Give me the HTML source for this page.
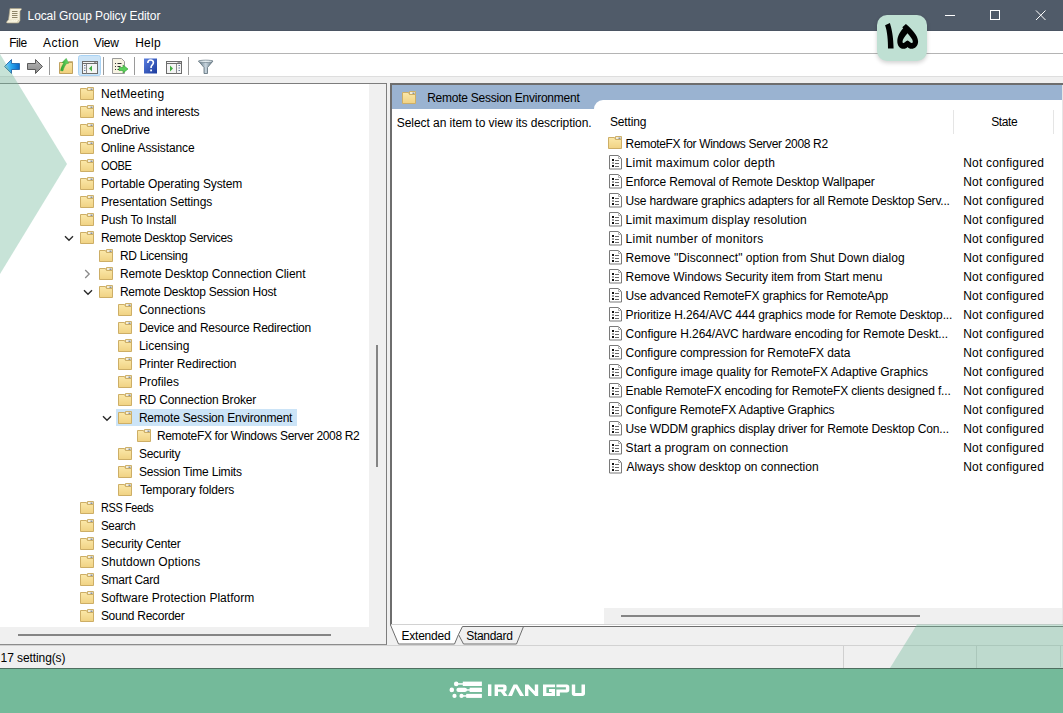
<!DOCTYPE html>
<html><head><meta charset="utf-8"><style>
*{margin:0;padding:0;box-sizing:border-box}
html,body{width:1063px;height:713px;overflow:hidden;background:#f0f0f0;font-family:"Liberation Sans", sans-serif;font-size:12px;color:#000}
.a{position:absolute}
.ic{position:absolute;display:block}
.t{position:absolute;white-space:nowrap;line-height:15px;font-size:12px}
</style></head><body>
<svg width="0" height="0" style="position:absolute"><defs>
<linearGradient id="fg" x1="0" y1="0" x2="0" y2="1"><stop offset="0" stop-color="#fbe8a9"/><stop offset="1" stop-color="#f0d283"/></linearGradient>
</defs></svg>

<!-- title bar -->
<div class="a" style="left:0;top:0;width:1063px;height:31px;background:#505b69;border-bottom:1px solid #4b5563"></div>
<svg class="ic" style="left:6px;top:7px" width="17" height="17" viewBox="0 0 17 17">
<path d="M4 1.5h10.5c0.8 0 1.2 0.5 0.9 1.2l-1.4 1.3v9.5l-1.5 2.5h-11c-0.9 0-1.3-0.6-0.8-1.3l1.8-1.7z" fill="#f6f1dc" stroke="#a9a084" stroke-width="0.7"/>
<path d="M2 13.3h10.5l-1.3 2.5" fill="none" stroke="#c9c09c" stroke-width="0.8"/>
<path d="M1.6 14.2c1.5-0.6 3-0.6 10.2-0.6" fill="none" stroke="#fffbe8" stroke-width="1"/>
<path d="M6 4.5h5.5M6 6.5h5.5M6 8.5h5.5M6 10.5h5.5" stroke="#8f876a" stroke-width="1"/>
</svg>
<div class="t" style="left:27.60px;top:9px;letter-spacing:-0.108px;color:#fff">Local Group Policy Editor</div>
<svg class="ic" style="left:944px;top:10px" width="104" height="12" viewBox="0 0 104 12">
<path d="M1 5.5h10" stroke="#fff" stroke-width="1"/>
<rect x="46.5" y="0.5" width="9" height="9" fill="none" stroke="#fff" stroke-width="1"/>
<path d="M92 0.5l9.5 9.5M101.5 0.5l-9.5 9.5" stroke="#fff" stroke-width="1"/>
</svg>

<!-- menu -->
<div class="a" style="left:0;top:31px;width:1063px;height:23px;background:#fff;border-bottom:1px solid #b4b4b4"></div>
<div class="t" style="left:9.20px;top:35.5px;letter-spacing:-0.467px">File</div>
<div class="t" style="left:43.00px;top:35.5px;letter-spacing:0.440px">Action</div>
<div class="t" style="left:93.80px;top:35.5px;letter-spacing:-0.200px">View</div>
<div class="t" style="left:135.20px;top:35.5px;letter-spacing:0.267px">Help</div>

<!-- toolbar -->
<div class="a" style="left:0;top:54px;width:1063px;height:22px;background:#fff"></div>
<div class="a" style="left:0;top:76px;width:1063px;height:7px;background:#f0f0f0;border-top:1px solid #dedede"></div>
<!-- toolbar icons -->
<svg class="ic" style="left:0;top:54px" width="220" height="22" viewBox="0 54 220 22">
<defs>
<linearGradient id="bl" x1="0" y1="0" x2="1" y2="0"><stop offset="0" stop-color="#8fd6f7"/><stop offset="0.45" stop-color="#2aa8ee"/><stop offset="1" stop-color="#0a66c8"/></linearGradient>
<linearGradient id="gr" x1="0" y1="0" x2="0" y2="1"><stop offset="0" stop-color="#b8b8b8"/><stop offset="1" stop-color="#8a8a8a"/></linearGradient>
<linearGradient id="hb" x1="0" y1="0" x2="1" y2="1"><stop offset="0" stop-color="#5b7fe0"/><stop offset="1" stop-color="#1a3a9c"/></linearGradient>
<linearGradient id="uf" x1="0" y1="0" x2="0" y2="1"><stop offset="0" stop-color="#f8e4a4"/><stop offset="1" stop-color="#f1cf7c"/></linearGradient>
<linearGradient id="ua" x1="0" y1="0" x2="1" y2="0"><stop offset="0" stop-color="#2aa02a"/><stop offset="1" stop-color="#6fe06f"/></linearGradient>
<linearGradient id="fn" x1="0" y1="0" x2="1" y2="0"><stop offset="0" stop-color="#5a6f7c"/><stop offset="0.5" stop-color="#c9d6df"/><stop offset="1" stop-color="#5a6f7c"/></linearGradient>
</defs>
<!-- back -->
<path d="M4.5 66.5L11.5 59.5V63.5H19.5V69.5H11.5V73.5Z" fill="url(#bl)" stroke="#2f6fae" stroke-width="1" stroke-linejoin="round"/>
<!-- forward -->
<path d="M42.5 66.5L35.5 59.5V63.5H27.5V69.5H35.5V73.5Z" fill="url(#gr)" stroke="#5a5a5a" stroke-width="1" stroke-linejoin="round"/>
<rect x="49" y="57" width="1" height="18" fill="#9a9a9a"/>
<!-- up folder -->
<path d="M68.5 61.5h4v2h-4z" fill="#e9e2c8" stroke="#b9a060" stroke-width="0.7"/>
<path d="M59.5 62.5h13v11h-13z" fill="url(#uf)" stroke="#b99a55" stroke-width="0.9"/>
<path d="M60.6 70.6C61.2 67.5 62.3 65 63.8 63.3L62.2 62.4L66.2 58.4L68.6 63.3L66.6 63.5C65 65.4 63.7 67.9 62.9 70.9Z" fill="url(#ua)" stroke="#2f9a2f" stroke-width="0.5" stroke-linejoin="round"/>
<!-- highlighted button -->
<rect x="78.5" y="55.5" width="22" height="20" rx="2" fill="#cce4f7" stroke="#a9d3f5"/>
<rect x="82.5" y="61.5" width="15" height="12" fill="#f4f4f4" stroke="#6c6c6c"/>
<path d="M82.5 63.5h15" stroke="#6c6c6c"/>
<path d="M94 62.5h2.5" stroke="#9a9a9a"/>
<path d="M86.5 64v9.5" stroke="#8a8a8a"/>
<path d="M84 65.5h1.5M84 68h1.5M84 70.5h1.5" stroke="#6a7fa0"/>
<path d="M92 65.5v6l-3-3z" fill="#3fae3f"/>
<rect x="103" y="57" width="1" height="18" fill="#9a9a9a"/>
<!-- export list -->
<path d="M112.5 58.5h9l3 3v12h-12z" fill="#f7f3e2" stroke="#8f8f8f" stroke-width="0.9"/>
<path d="M115 63.5h1M117.5 63.5h4M115 66.5h1M117.5 66.5h3M115 69.5h1M117.5 69.5h2" stroke="#333" stroke-width="1"/>
<path d="M119 67.5h4v-2.5l5 4-5 4v-2.5h-4z" fill="#5bd05b" stroke="#2f9f2f" stroke-width="0.6"/>
<rect x="134" y="57" width="1" height="18" fill="#9a9a9a"/>
<!-- help -->
<rect x="144" y="58.5" width="13" height="15" fill="url(#hb)"/>
<path d="M147.8 63c0-2 1.3-3 2.8-3s2.8 1 2.8 2.8c0 2-2.3 2.2-2.3 4.3v0.8" fill="none" stroke="#fff" stroke-width="1.6"/>
<rect x="150.2" y="69.5" width="1.8" height="1.8" fill="#fff"/>
<!-- show action pane -->
<rect x="166.5" y="61.5" width="15" height="12" fill="#f4f4f4" stroke="#6c6c6c"/>
<path d="M166.5 63.5h15" stroke="#6c6c6c"/>
<path d="M177.5 62.5h3" stroke="#9a9a9a"/>
<path d="M176.5 64v9.5" stroke="#8a8a8a"/>
<path d="M178.5 65.5h1.5M178.5 68h1.5M178.5 70.5h1.5" stroke="#6a7fa0"/>
<path d="M170 65.5v6l3-3z" fill="#3fae3f"/>
<rect x="188" y="57" width="1" height="18" fill="#9a9a9a"/>
<!-- filter -->
<path d="M198.5 61h14.5l-5.5 6.5v6h-3.5v-6z" fill="url(#fn)" stroke="#5d6f7a" stroke-width="0.8" stroke-linejoin="round"/>
<ellipse cx="205.75" cy="61.3" rx="7" ry="1.2" fill="#e6eef2" stroke="#5d6f7a" stroke-width="0.6"/>
</svg>


<!-- tree pane -->
<div class="a" style="left:0;top:83px;width:387px;height:562px;background:#fff;border-top:1px solid #7d7d7d;border-right:1px solid #7d7d7d;border-bottom:1px solid #8c8c8c;overflow:hidden">
</div>
<div class="a" style="left:116px;top:409px;width:181px;height:17px;background:#cce4f7"></div>
<div class="a" style="left:0;top:0;width:369px;height:627px;overflow:hidden;clip-path:inset(84px 0 0 0)">
<svg class="ic" style="left:80px;top:87px" width="15" height="14" viewBox="0 0 15 14"><path d="M7.5 0.5h6v4h-6z" fill="#f3ecd6" stroke="#cdb06a"/><path d="M10.5 1.5h2v1.5h-2z" fill="#8a949e"/><path d="M0.5 1.5h6l1 2h6v9h-13z" fill="url(#fg)" stroke="#cdae66"/></svg><div class="t" style="left:100.90px;top:87.0px;letter-spacing:0.200px">NetMeeting</div><svg class="ic" style="left:80px;top:105px" width="15" height="14" viewBox="0 0 15 14"><path d="M7.5 0.5h6v4h-6z" fill="#f3ecd6" stroke="#cdb06a"/><path d="M10.5 1.5h2v1.5h-2z" fill="#8a949e"/><path d="M0.5 1.5h6l1 2h6v9h-13z" fill="url(#fg)" stroke="#cdae66"/></svg><div class="t" style="left:100.90px;top:105.0px;letter-spacing:-0.200px">News and interests</div><svg class="ic" style="left:80px;top:123px" width="15" height="14" viewBox="0 0 15 14"><path d="M7.5 0.5h6v4h-6z" fill="#f3ecd6" stroke="#cdb06a"/><path d="M10.5 1.5h2v1.5h-2z" fill="#8a949e"/><path d="M0.5 1.5h6l1 2h6v9h-13z" fill="url(#fg)" stroke="#cdae66"/></svg><div class="t" style="left:100.90px;top:123.0px;letter-spacing:-0.229px">OneDrive</div><svg class="ic" style="left:80px;top:141px" width="15" height="14" viewBox="0 0 15 14"><path d="M7.5 0.5h6v4h-6z" fill="#f3ecd6" stroke="#cdb06a"/><path d="M10.5 1.5h2v1.5h-2z" fill="#8a949e"/><path d="M0.5 1.5h6l1 2h6v9h-13z" fill="url(#fg)" stroke="#cdae66"/></svg><div class="t" style="left:100.90px;top:141.0px;letter-spacing:-0.100px">Online Assistance</div><svg class="ic" style="left:80px;top:159px" width="15" height="14" viewBox="0 0 15 14"><path d="M7.5 0.5h6v4h-6z" fill="#f3ecd6" stroke="#cdb06a"/><path d="M10.5 1.5h2v1.5h-2z" fill="#8a949e"/><path d="M0.5 1.5h6l1 2h6v9h-13z" fill="url(#fg)" stroke="#cdae66"/></svg><div class="t" style="left:100.90px;top:159.0px;transform:scaleX(0.92);transform-origin:1.2px 0;letter-spacing:-0.400px">OOBE</div><svg class="ic" style="left:80px;top:177px" width="15" height="14" viewBox="0 0 15 14"><path d="M7.5 0.5h6v4h-6z" fill="#f3ecd6" stroke="#cdb06a"/><path d="M10.5 1.5h2v1.5h-2z" fill="#8a949e"/><path d="M0.5 1.5h6l1 2h6v9h-13z" fill="url(#fg)" stroke="#cdae66"/></svg><div class="t" style="left:100.90px;top:177.0px;letter-spacing:-0.108px">Portable Operating System</div><svg class="ic" style="left:80px;top:195px" width="15" height="14" viewBox="0 0 15 14"><path d="M7.5 0.5h6v4h-6z" fill="#f3ecd6" stroke="#cdb06a"/><path d="M10.5 1.5h2v1.5h-2z" fill="#8a949e"/><path d="M0.5 1.5h6l1 2h6v9h-13z" fill="url(#fg)" stroke="#cdae66"/></svg><div class="t" style="left:100.90px;top:195.0px;letter-spacing:-0.140px">Presentation Settings</div><svg class="ic" style="left:80px;top:213px" width="15" height="14" viewBox="0 0 15 14"><path d="M7.5 0.5h6v4h-6z" fill="#f3ecd6" stroke="#cdb06a"/><path d="M10.5 1.5h2v1.5h-2z" fill="#8a949e"/><path d="M0.5 1.5h6l1 2h6v9h-13z" fill="url(#fg)" stroke="#cdae66"/></svg><div class="t" style="left:100.90px;top:213.0px;letter-spacing:-0.171px">Push To Install</div><svg class="ic" style="left:80px;top:231px" width="15" height="14" viewBox="0 0 15 14"><path d="M7.5 0.5h6v4h-6z" fill="#f3ecd6" stroke="#cdb06a"/><path d="M10.5 1.5h2v1.5h-2z" fill="#8a949e"/><path d="M0.5 1.5h6l1 2h6v9h-13z" fill="url(#fg)" stroke="#cdae66"/></svg><div class="t" style="left:100.90px;top:231.0px;letter-spacing:-0.309px">Remote Desktop Services</div><svg class="ic" style="left:64px;top:235px" width="10" height="7" viewBox="0 0 10 7"><path d="M1 1.2l4 4 4-4" fill="none" stroke="#2b2b2b" stroke-width="1.4"/></svg><svg class="ic" style="left:99px;top:249px" width="15" height="14" viewBox="0 0 15 14"><path d="M7.5 0.5h6v4h-6z" fill="#f3ecd6" stroke="#cdb06a"/><path d="M10.5 1.5h2v1.5h-2z" fill="#8a949e"/><path d="M0.5 1.5h6l1 2h6v9h-13z" fill="url(#fg)" stroke="#cdae66"/></svg><div class="t" style="left:119.90px;top:249.0px;letter-spacing:-0.309px">RD Licensing</div><svg class="ic" style="left:99px;top:267px" width="15" height="14" viewBox="0 0 15 14"><path d="M7.5 0.5h6v4h-6z" fill="#f3ecd6" stroke="#cdb06a"/><path d="M10.5 1.5h2v1.5h-2z" fill="#8a949e"/><path d="M0.5 1.5h6l1 2h6v9h-13z" fill="url(#fg)" stroke="#cdae66"/></svg><div class="t" style="left:119.90px;top:267.0px;letter-spacing:-0.058px">Remote Desktop Connection Client</div><svg class="ic" style="left:84px;top:269px" width="7" height="10" viewBox="0 0 7 10"><path d="M1.2 1l4 4-4 4" fill="none" stroke="#8a8a8a" stroke-width="1.3"/></svg><svg class="ic" style="left:99px;top:285px" width="15" height="14" viewBox="0 0 15 14"><path d="M7.5 0.5h6v4h-6z" fill="#f3ecd6" stroke="#cdb06a"/><path d="M10.5 1.5h2v1.5h-2z" fill="#8a949e"/><path d="M0.5 1.5h6l1 2h6v9h-13z" fill="url(#fg)" stroke="#cdae66"/></svg><div class="t" style="left:119.90px;top:285.0px;letter-spacing:-0.262px">Remote Desktop Session Host</div><svg class="ic" style="left:83px;top:289px" width="10" height="7" viewBox="0 0 10 7"><path d="M1 1.2l4 4 4-4" fill="none" stroke="#2b2b2b" stroke-width="1.4"/></svg><svg class="ic" style="left:118px;top:303px" width="15" height="14" viewBox="0 0 15 14"><path d="M7.5 0.5h6v4h-6z" fill="#f3ecd6" stroke="#cdb06a"/><path d="M10.5 1.5h2v1.5h-2z" fill="#8a949e"/><path d="M0.5 1.5h6l1 2h6v9h-13z" fill="url(#fg)" stroke="#cdae66"/></svg><div class="t" style="left:138.90px;top:303.0px">Connections</div><svg class="ic" style="left:118px;top:321px" width="15" height="14" viewBox="0 0 15 14"><path d="M7.5 0.5h6v4h-6z" fill="#f3ecd6" stroke="#cdb06a"/><path d="M10.5 1.5h2v1.5h-2z" fill="#8a949e"/><path d="M0.5 1.5h6l1 2h6v9h-13z" fill="url(#fg)" stroke="#cdae66"/></svg><div class="t" style="left:138.90px;top:321.0px;letter-spacing:-0.213px">Device and Resource Redirection</div><svg class="ic" style="left:118px;top:339px" width="15" height="14" viewBox="0 0 15 14"><path d="M7.5 0.5h6v4h-6z" fill="#f3ecd6" stroke="#cdb06a"/><path d="M10.5 1.5h2v1.5h-2z" fill="#8a949e"/><path d="M0.5 1.5h6l1 2h6v9h-13z" fill="url(#fg)" stroke="#cdae66"/></svg><div class="t" style="left:138.90px;top:339.0px;letter-spacing:-0.025px">Licensing</div><svg class="ic" style="left:118px;top:357px" width="15" height="14" viewBox="0 0 15 14"><path d="M7.5 0.5h6v4h-6z" fill="#f3ecd6" stroke="#cdb06a"/><path d="M10.5 1.5h2v1.5h-2z" fill="#8a949e"/><path d="M0.5 1.5h6l1 2h6v9h-13z" fill="url(#fg)" stroke="#cdae66"/></svg><div class="t" style="left:138.90px;top:357.0px;letter-spacing:-0.100px">Printer Redirection</div><svg class="ic" style="left:118px;top:375px" width="15" height="14" viewBox="0 0 15 14"><path d="M7.5 0.5h6v4h-6z" fill="#f3ecd6" stroke="#cdb06a"/><path d="M10.5 1.5h2v1.5h-2z" fill="#8a949e"/><path d="M0.5 1.5h6l1 2h6v9h-13z" fill="url(#fg)" stroke="#cdae66"/></svg><div class="t" style="left:138.90px;top:375.0px">Profiles</div><svg class="ic" style="left:118px;top:393px" width="15" height="14" viewBox="0 0 15 14"><path d="M7.5 0.5h6v4h-6z" fill="#f3ecd6" stroke="#cdb06a"/><path d="M10.5 1.5h2v1.5h-2z" fill="#8a949e"/><path d="M0.5 1.5h6l1 2h6v9h-13z" fill="url(#fg)" stroke="#cdae66"/></svg><div class="t" style="left:138.90px;top:393.0px;letter-spacing:-0.137px">RD Connection Broker</div><svg class="ic" style="left:118px;top:411px" width="15" height="14" viewBox="0 0 15 14"><path d="M7.5 0.5h6v4h-6z" fill="#f3ecd6" stroke="#cdb06a"/><path d="M10.5 1.5h2v1.5h-2z" fill="#8a949e"/><path d="M0.5 1.5h6l1 2h6v9h-13z" fill="url(#fg)" stroke="#cdae66"/></svg><div class="t" style="left:138.90px;top:411.0px;letter-spacing:-0.208px">Remote Session Environment</div><svg class="ic" style="left:102px;top:415px" width="10" height="7" viewBox="0 0 10 7"><path d="M1 1.2l4 4 4-4" fill="none" stroke="#2b2b2b" stroke-width="1.4"/></svg><svg class="ic" style="left:137px;top:429px" width="15" height="14" viewBox="0 0 15 14"><path d="M7.5 0.5h6v4h-6z" fill="#f3ecd6" stroke="#cdb06a"/><path d="M10.5 1.5h2v1.5h-2z" fill="#8a949e"/><path d="M0.5 1.5h6l1 2h6v9h-13z" fill="url(#fg)" stroke="#cdae66"/></svg><div class="t" style="left:156.90px;top:429.0px;letter-spacing:-0.329px">RemoteFX for Windows Server 2008 R2</div><svg class="ic" style="left:118px;top:447px" width="15" height="14" viewBox="0 0 15 14"><path d="M7.5 0.5h6v4h-6z" fill="#f3ecd6" stroke="#cdb06a"/><path d="M10.5 1.5h2v1.5h-2z" fill="#8a949e"/><path d="M0.5 1.5h6l1 2h6v9h-13z" fill="url(#fg)" stroke="#cdae66"/></svg><div class="t" style="left:138.90px;top:447.0px;letter-spacing:-0.257px">Security</div><svg class="ic" style="left:118px;top:465px" width="15" height="14" viewBox="0 0 15 14"><path d="M7.5 0.5h6v4h-6z" fill="#f3ecd6" stroke="#cdb06a"/><path d="M10.5 1.5h2v1.5h-2z" fill="#8a949e"/><path d="M0.5 1.5h6l1 2h6v9h-13z" fill="url(#fg)" stroke="#cdae66"/></svg><div class="t" style="left:138.90px;top:465.0px;letter-spacing:-0.200px">Session Time Limits</div><svg class="ic" style="left:118px;top:483px" width="15" height="14" viewBox="0 0 15 14"><path d="M7.5 0.5h6v4h-6z" fill="#f3ecd6" stroke="#cdb06a"/><path d="M10.5 1.5h2v1.5h-2z" fill="#8a949e"/><path d="M0.5 1.5h6l1 2h6v9h-13z" fill="url(#fg)" stroke="#cdae66"/></svg><div class="t" style="left:139.90px;top:483.0px;letter-spacing:-0.100px">Temporary folders</div><svg class="ic" style="left:80px;top:501px" width="15" height="14" viewBox="0 0 15 14"><path d="M7.5 0.5h6v4h-6z" fill="#f3ecd6" stroke="#cdb06a"/><path d="M10.5 1.5h2v1.5h-2z" fill="#8a949e"/><path d="M0.5 1.5h6l1 2h6v9h-13z" fill="url(#fg)" stroke="#cdae66"/></svg><div class="t" style="left:100.90px;top:501.0px;transform:scaleX(0.905);transform-origin:1.2px 0;letter-spacing:-0.400px">RSS Feeds</div><svg class="ic" style="left:80px;top:519px" width="15" height="14" viewBox="0 0 15 14"><path d="M7.5 0.5h6v4h-6z" fill="#f3ecd6" stroke="#cdb06a"/><path d="M10.5 1.5h2v1.5h-2z" fill="#8a949e"/><path d="M0.5 1.5h6l1 2h6v9h-13z" fill="url(#fg)" stroke="#cdae66"/></svg><div class="t" style="left:100.90px;top:519.0px;transform:scaleX(0.963);transform-origin:1.2px 0;letter-spacing:-0.400px">Search</div><svg class="ic" style="left:80px;top:537px" width="15" height="14" viewBox="0 0 15 14"><path d="M7.5 0.5h6v4h-6z" fill="#f3ecd6" stroke="#cdb06a"/><path d="M10.5 1.5h2v1.5h-2z" fill="#8a949e"/><path d="M0.5 1.5h6l1 2h6v9h-13z" fill="url(#fg)" stroke="#cdae66"/></svg><div class="t" style="left:100.90px;top:537.0px;letter-spacing:-0.200px">Security Center</div><svg class="ic" style="left:80px;top:555px" width="15" height="14" viewBox="0 0 15 14"><path d="M7.5 0.5h6v4h-6z" fill="#f3ecd6" stroke="#cdb06a"/><path d="M10.5 1.5h2v1.5h-2z" fill="#8a949e"/><path d="M0.5 1.5h6l1 2h6v9h-13z" fill="url(#fg)" stroke="#cdae66"/></svg><div class="t" style="left:100.90px;top:555.0px;letter-spacing:0.080px">Shutdown Options</div><svg class="ic" style="left:80px;top:573px" width="15" height="14" viewBox="0 0 15 14"><path d="M7.5 0.5h6v4h-6z" fill="#f3ecd6" stroke="#cdb06a"/><path d="M10.5 1.5h2v1.5h-2z" fill="#8a949e"/><path d="M0.5 1.5h6l1 2h6v9h-13z" fill="url(#fg)" stroke="#cdae66"/></svg><div class="t" style="left:100.90px;top:573.0px;letter-spacing:-0.289px">Smart Card</div><svg class="ic" style="left:80px;top:591px" width="15" height="14" viewBox="0 0 15 14"><path d="M7.5 0.5h6v4h-6z" fill="#f3ecd6" stroke="#cdb06a"/><path d="M10.5 1.5h2v1.5h-2z" fill="#8a949e"/><path d="M0.5 1.5h6l1 2h6v9h-13z" fill="url(#fg)" stroke="#cdae66"/></svg><div class="t" style="left:100.90px;top:591.0px;letter-spacing:0.022px">Software Protection Platform</div><svg class="ic" style="left:80px;top:609px" width="15" height="14" viewBox="0 0 15 14"><path d="M7.5 0.5h6v4h-6z" fill="#f3ecd6" stroke="#cdb06a"/><path d="M10.5 1.5h2v1.5h-2z" fill="#8a949e"/><path d="M0.5 1.5h6l1 2h6v9h-13z" fill="url(#fg)" stroke="#cdae66"/></svg><div class="t" style="left:100.90px;top:609.0px;letter-spacing:-0.277px">Sound Recorder</div>
</div>
<div class="a" style="left:369px;top:84px;width:17px;height:543px;background:#f0f0f0"></div>
<div class="a" style="left:376px;top:345px;width:2px;height:122px;background:#858585"></div>
<div class="a" style="left:0;top:627px;width:386px;height:17px;background:#f0f0f0"></div>
<div class="a" style="left:18px;top:634px;width:313px;height:2px;background:#858585"></div>

<!-- right pane -->
<div class="a" style="left:390px;top:83px;width:673px;height:543px;background:#fff;border-top:2px solid #6e6e6e;border-left:2px solid #6e6e6e"></div>
<div class="a" style="left:392px;top:85px;width:670px;height:24px;background:#9ab3d1"></div>
<div class="a" style="left:594px;top:100px;width:468px;height:525px;background:#fff;border-top-left-radius:9px"></div>
<svg class="ic" style="left:402px;top:91px" width="15" height="14" viewBox="0 0 15 14"><path d="M7.5 0.5h6v4h-6z" fill="#f3ecd6" stroke="#cdb06a"/><path d="M10.5 1.5h2v1.5h-2z" fill="#8a949e"/><path d="M0.5 1.5h6l1 2h6v9h-13z" fill="url(#fg)" stroke="#cdae66"/></svg>
<div class="t" style="left:427.20px;top:91px;letter-spacing:-0.248px">Remote Session Environment</div>
<div class="t" style="left:396.70px;top:116px;letter-spacing:-0.047px">Select an item to view its description.</div>
<div class="t" style="left:610.00px;top:115px;letter-spacing:-0.167px">Setting</div>
<div class="t" style="left:991.20px;top:115px;letter-spacing:-0.400px">State</div>
<div class="a" style="left:953px;top:110px;width:1px;height:24px;background:#e5e5e5"></div>
<div class="a" style="left:1053px;top:110px;width:1px;height:24px;background:#e5e5e5"></div>
<svg class="ic" style="left:608px;top:136px" width="15" height="14" viewBox="0 0 15 14"><path d="M7.5 0.5h6v4h-6z" fill="#f3ecd6" stroke="#cdb06a"/><path d="M10.5 1.5h2v1.5h-2z" fill="#8a949e"/><path d="M0.5 1.5h6l1 2h6v9h-13z" fill="url(#fg)" stroke="#cdae66"/></svg><div class="t" style="left:625.60px;top:137px;letter-spacing:-0.341px">RemoteFX for Windows Server 2008 R2</div><svg class="ic" style="left:609px;top:155px" width="14" height="15" viewBox="0 0 14 15"><path d="M0.5 0.5h9l3 3v10.5h-12z" fill="#fff" stroke="#7a7a7a"/><path d="M9.5 0.5v3h3" fill="none" stroke="#b5b5b5"/><rect x="3" y="4" width="2" height="2" fill="#111"/><rect x="3" y="7" width="2" height="2" fill="#999"/><rect x="3" y="10" width="2" height="2" fill="#111"/><path d="M6 5h4v1h-4zM6 8h4v1h-4zM6 11h4v1h-4z" fill="#6a6a6a"/></svg><div class="t" style="left:625.60px;top:156px;letter-spacing:0.250px">Limit maximum color depth</div><div class="t" style="left:963.20px;top:156px;letter-spacing:0.200px">Not configured</div><svg class="ic" style="left:609px;top:174px" width="14" height="15" viewBox="0 0 14 15"><path d="M0.5 0.5h9l3 3v10.5h-12z" fill="#fff" stroke="#7a7a7a"/><path d="M9.5 0.5v3h3" fill="none" stroke="#b5b5b5"/><rect x="3" y="4" width="2" height="2" fill="#111"/><rect x="3" y="7" width="2" height="2" fill="#999"/><rect x="3" y="10" width="2" height="2" fill="#111"/><path d="M6 5h4v1h-4zM6 8h4v1h-4zM6 11h4v1h-4z" fill="#6a6a6a"/></svg><div class="t" style="left:625.60px;top:175px;letter-spacing:-0.138px">Enforce Removal of Remote Desktop Wallpaper</div><div class="t" style="left:963.20px;top:175px;letter-spacing:0.200px">Not configured</div><svg class="ic" style="left:609px;top:193px" width="14" height="15" viewBox="0 0 14 15"><path d="M0.5 0.5h9l3 3v10.5h-12z" fill="#fff" stroke="#7a7a7a"/><path d="M9.5 0.5v3h3" fill="none" stroke="#b5b5b5"/><rect x="3" y="4" width="2" height="2" fill="#111"/><rect x="3" y="7" width="2" height="2" fill="#999"/><rect x="3" y="10" width="2" height="2" fill="#111"/><path d="M6 5h4v1h-4zM6 8h4v1h-4zM6 11h4v1h-4z" fill="#6a6a6a"/></svg><div class="t" style="left:625.60px;top:194px;letter-spacing:-0.193px">Use hardware graphics adapters for all Remote Desktop Serv...</div><div class="t" style="left:963.20px;top:194px;letter-spacing:0.200px">Not configured</div><svg class="ic" style="left:609px;top:212px" width="14" height="15" viewBox="0 0 14 15"><path d="M0.5 0.5h9l3 3v10.5h-12z" fill="#fff" stroke="#7a7a7a"/><path d="M9.5 0.5v3h3" fill="none" stroke="#b5b5b5"/><rect x="3" y="4" width="2" height="2" fill="#111"/><rect x="3" y="7" width="2" height="2" fill="#999"/><rect x="3" y="10" width="2" height="2" fill="#111"/><path d="M6 5h4v1h-4zM6 8h4v1h-4zM6 11h4v1h-4z" fill="#6a6a6a"/></svg><div class="t" style="left:625.60px;top:213px;letter-spacing:0.142px">Limit maximum display resolution</div><div class="t" style="left:963.20px;top:213px;letter-spacing:0.200px">Not configured</div><svg class="ic" style="left:609px;top:231px" width="14" height="15" viewBox="0 0 14 15"><path d="M0.5 0.5h9l3 3v10.5h-12z" fill="#fff" stroke="#7a7a7a"/><path d="M9.5 0.5v3h3" fill="none" stroke="#b5b5b5"/><rect x="3" y="4" width="2" height="2" fill="#111"/><rect x="3" y="7" width="2" height="2" fill="#999"/><rect x="3" y="10" width="2" height="2" fill="#111"/><path d="M6 5h4v1h-4zM6 8h4v1h-4zM6 11h4v1h-4z" fill="#6a6a6a"/></svg><div class="t" style="left:625.60px;top:232px;letter-spacing:0.243px">Limit number of monitors</div><div class="t" style="left:963.20px;top:232px;letter-spacing:0.200px">Not configured</div><svg class="ic" style="left:609px;top:250px" width="14" height="15" viewBox="0 0 14 15"><path d="M0.5 0.5h9l3 3v10.5h-12z" fill="#fff" stroke="#7a7a7a"/><path d="M9.5 0.5v3h3" fill="none" stroke="#b5b5b5"/><rect x="3" y="4" width="2" height="2" fill="#111"/><rect x="3" y="7" width="2" height="2" fill="#999"/><rect x="3" y="10" width="2" height="2" fill="#111"/><path d="M6 5h4v1h-4zM6 8h4v1h-4zM6 11h4v1h-4z" fill="#6a6a6a"/></svg><div class="t" style="left:625.60px;top:251px;letter-spacing:0.051px">Remove &quot;Disconnect&quot; option from Shut Down dialog</div><div class="t" style="left:963.20px;top:251px;letter-spacing:0.200px">Not configured</div><svg class="ic" style="left:609px;top:269px" width="14" height="15" viewBox="0 0 14 15"><path d="M0.5 0.5h9l3 3v10.5h-12z" fill="#fff" stroke="#7a7a7a"/><path d="M9.5 0.5v3h3" fill="none" stroke="#b5b5b5"/><rect x="3" y="4" width="2" height="2" fill="#111"/><rect x="3" y="7" width="2" height="2" fill="#999"/><rect x="3" y="10" width="2" height="2" fill="#111"/><path d="M6 5h4v1h-4zM6 8h4v1h-4zM6 11h4v1h-4z" fill="#6a6a6a"/></svg><div class="t" style="left:625.60px;top:270px;letter-spacing:-0.047px">Remove Windows Security item from Start menu</div><div class="t" style="left:963.20px;top:270px;letter-spacing:0.200px">Not configured</div><svg class="ic" style="left:609px;top:288px" width="14" height="15" viewBox="0 0 14 15"><path d="M0.5 0.5h9l3 3v10.5h-12z" fill="#fff" stroke="#7a7a7a"/><path d="M9.5 0.5v3h3" fill="none" stroke="#b5b5b5"/><rect x="3" y="4" width="2" height="2" fill="#111"/><rect x="3" y="7" width="2" height="2" fill="#999"/><rect x="3" y="10" width="2" height="2" fill="#111"/><path d="M6 5h4v1h-4zM6 8h4v1h-4zM6 11h4v1h-4z" fill="#6a6a6a"/></svg><div class="t" style="left:625.60px;top:289px;letter-spacing:-0.177px">Use advanced RemoteFX graphics for RemoteApp</div><div class="t" style="left:963.20px;top:289px;letter-spacing:0.200px">Not configured</div><svg class="ic" style="left:609px;top:307px" width="14" height="15" viewBox="0 0 14 15"><path d="M0.5 0.5h9l3 3v10.5h-12z" fill="#fff" stroke="#7a7a7a"/><path d="M9.5 0.5v3h3" fill="none" stroke="#b5b5b5"/><rect x="3" y="4" width="2" height="2" fill="#111"/><rect x="3" y="7" width="2" height="2" fill="#999"/><rect x="3" y="10" width="2" height="2" fill="#111"/><path d="M6 5h4v1h-4zM6 8h4v1h-4zM6 11h4v1h-4z" fill="#6a6a6a"/></svg><div class="t" style="left:625.60px;top:308px;letter-spacing:-0.132px">Prioritize H.264/AVC 444 graphics mode for Remote Desktop...</div><div class="t" style="left:963.20px;top:308px;letter-spacing:0.200px">Not configured</div><svg class="ic" style="left:609px;top:326px" width="14" height="15" viewBox="0 0 14 15"><path d="M0.5 0.5h9l3 3v10.5h-12z" fill="#fff" stroke="#7a7a7a"/><path d="M9.5 0.5v3h3" fill="none" stroke="#b5b5b5"/><rect x="3" y="4" width="2" height="2" fill="#111"/><rect x="3" y="7" width="2" height="2" fill="#999"/><rect x="3" y="10" width="2" height="2" fill="#111"/><path d="M6 5h4v1h-4zM6 8h4v1h-4zM6 11h4v1h-4z" fill="#6a6a6a"/></svg><div class="t" style="left:625.60px;top:327px;letter-spacing:-0.075px">Configure H.264/AVC hardware encoding for Remote Deskt...</div><div class="t" style="left:963.20px;top:327px;letter-spacing:0.200px">Not configured</div><svg class="ic" style="left:609px;top:345px" width="14" height="15" viewBox="0 0 14 15"><path d="M0.5 0.5h9l3 3v10.5h-12z" fill="#fff" stroke="#7a7a7a"/><path d="M9.5 0.5v3h3" fill="none" stroke="#b5b5b5"/><rect x="3" y="4" width="2" height="2" fill="#111"/><rect x="3" y="7" width="2" height="2" fill="#999"/><rect x="3" y="10" width="2" height="2" fill="#111"/><path d="M6 5h4v1h-4zM6 8h4v1h-4zM6 11h4v1h-4z" fill="#6a6a6a"/></svg><div class="t" style="left:625.60px;top:346px;letter-spacing:-0.089px">Configure compression for RemoteFX data</div><div class="t" style="left:963.20px;top:346px;letter-spacing:0.200px">Not configured</div><svg class="ic" style="left:609px;top:364px" width="14" height="15" viewBox="0 0 14 15"><path d="M0.5 0.5h9l3 3v10.5h-12z" fill="#fff" stroke="#7a7a7a"/><path d="M9.5 0.5v3h3" fill="none" stroke="#b5b5b5"/><rect x="3" y="4" width="2" height="2" fill="#111"/><rect x="3" y="7" width="2" height="2" fill="#999"/><rect x="3" y="10" width="2" height="2" fill="#111"/><path d="M6 5h4v1h-4zM6 8h4v1h-4zM6 11h4v1h-4z" fill="#6a6a6a"/></svg><div class="t" style="left:625.60px;top:365px;letter-spacing:-0.045px">Configure image quality for RemoteFX Adaptive Graphics</div><div class="t" style="left:963.20px;top:365px;letter-spacing:0.200px">Not configured</div><svg class="ic" style="left:609px;top:383px" width="14" height="15" viewBox="0 0 14 15"><path d="M0.5 0.5h9l3 3v10.5h-12z" fill="#fff" stroke="#7a7a7a"/><path d="M9.5 0.5v3h3" fill="none" stroke="#b5b5b5"/><rect x="3" y="4" width="2" height="2" fill="#111"/><rect x="3" y="7" width="2" height="2" fill="#999"/><rect x="3" y="10" width="2" height="2" fill="#111"/><path d="M6 5h4v1h-4zM6 8h4v1h-4zM6 11h4v1h-4z" fill="#6a6a6a"/></svg><div class="t" style="left:625.60px;top:384px;letter-spacing:-0.155px">Enable RemoteFX encoding for RemoteFX clients designed f...</div><div class="t" style="left:963.20px;top:384px;letter-spacing:0.200px">Not configured</div><svg class="ic" style="left:609px;top:402px" width="14" height="15" viewBox="0 0 14 15"><path d="M0.5 0.5h9l3 3v10.5h-12z" fill="#fff" stroke="#7a7a7a"/><path d="M9.5 0.5v3h3" fill="none" stroke="#b5b5b5"/><rect x="3" y="4" width="2" height="2" fill="#111"/><rect x="3" y="7" width="2" height="2" fill="#999"/><rect x="3" y="10" width="2" height="2" fill="#111"/><path d="M6 5h4v1h-4zM6 8h4v1h-4zM6 11h4v1h-4z" fill="#6a6a6a"/></svg><div class="t" style="left:625.60px;top:403px;letter-spacing:-0.126px">Configure RemoteFX Adaptive Graphics</div><div class="t" style="left:963.20px;top:403px;letter-spacing:0.200px">Not configured</div><svg class="ic" style="left:609px;top:421px" width="14" height="15" viewBox="0 0 14 15"><path d="M0.5 0.5h9l3 3v10.5h-12z" fill="#fff" stroke="#7a7a7a"/><path d="M9.5 0.5v3h3" fill="none" stroke="#b5b5b5"/><rect x="3" y="4" width="2" height="2" fill="#111"/><rect x="3" y="7" width="2" height="2" fill="#999"/><rect x="3" y="10" width="2" height="2" fill="#111"/><path d="M6 5h4v1h-4zM6 8h4v1h-4zM6 11h4v1h-4z" fill="#6a6a6a"/></svg><div class="t" style="left:625.60px;top:422px;letter-spacing:-0.140px">Use WDDM graphics display driver for Remote Desktop Con...</div><div class="t" style="left:963.20px;top:422px;letter-spacing:0.200px">Not configured</div><svg class="ic" style="left:609px;top:440px" width="14" height="15" viewBox="0 0 14 15"><path d="M0.5 0.5h9l3 3v10.5h-12z" fill="#fff" stroke="#7a7a7a"/><path d="M9.5 0.5v3h3" fill="none" stroke="#b5b5b5"/><rect x="3" y="4" width="2" height="2" fill="#111"/><rect x="3" y="7" width="2" height="2" fill="#999"/><rect x="3" y="10" width="2" height="2" fill="#111"/><path d="M6 5h4v1h-4zM6 8h4v1h-4zM6 11h4v1h-4z" fill="#6a6a6a"/></svg><div class="t" style="left:625.60px;top:441px;letter-spacing:0.043px">Start a program on connection</div><div class="t" style="left:963.20px;top:441px;letter-spacing:0.200px">Not configured</div><svg class="ic" style="left:609px;top:459px" width="14" height="15" viewBox="0 0 14 15"><path d="M0.5 0.5h9l3 3v10.5h-12z" fill="#fff" stroke="#7a7a7a"/><path d="M9.5 0.5v3h3" fill="none" stroke="#b5b5b5"/><rect x="3" y="4" width="2" height="2" fill="#111"/><rect x="3" y="7" width="2" height="2" fill="#999"/><rect x="3" y="10" width="2" height="2" fill="#111"/><path d="M6 5h4v1h-4zM6 8h4v1h-4zM6 11h4v1h-4z" fill="#6a6a6a"/></svg><div class="t" style="left:626.60px;top:460px;letter-spacing:-0.025px">Always show desktop on connection</div><div class="t" style="left:963.20px;top:460px;letter-spacing:0.200px">Not configured</div>
<div class="a" style="left:604px;top:608px;width:458px;height:17px;background:#f0f0f0"></div>
<div class="a" style="left:1062px;top:85px;width:1px;height:540px;background:#e6e6e6"></div>
<div class="a" style="left:621px;top:615px;width:299px;height:2px;background:#858585"></div>

<!-- tabs -->
<div class="a" style="left:391px;top:624px;width:672px;height:1px;background:#d2d2d2"></div>
<svg class="ic" style="left:385px;top:620px" width="678" height="26" viewBox="385 620 678 26">
<path d="M390 625L398.5 644H454.5L462 625z" fill="#fff"/>
<path d="M390.5 625L398.5 644H454.5L458.5 634.5" fill="none" stroke="#6e6e6e" stroke-width="1"/>
<path d="M462.5 626.5L458.5 634.5L463.5 644H516.5L523.5 626.5z" fill="#f0f0f0" stroke="#6e6e6e" stroke-width="1"/>
<path d="M523 626.5H1063" stroke="#6e6e6e" stroke-width="1"/>
</svg>
<div class="t" style="left:401.40px;top:629px;letter-spacing:-0.200px">Extended</div>
<div class="t" style="left:466.20px;top:629px;letter-spacing:-0.286px">Standard</div>

<!-- status bar -->
<div class="a" style="left:0;top:645px;width:1063px;height:1px;background:#d2d2d2"></div>
<div class="t" style="left:0.60px;top:651px;letter-spacing:-0.092px">17 setting(s)</div>
<div class="a" style="left:843px;top:646px;width:1px;height:22px;background:#d0d0d0"></div>
<div class="a" style="left:976px;top:646px;width:1px;height:22px;background:#d0d0d0"></div>
<div class="a" style="left:1060px;top:646px;width:1px;height:21px;background:#d0d0d0"></div>

<!-- footer -->
<div class="a" style="left:0;top:668px;width:1063px;height:45px;background:#74ba9a;border-top:1px solid #4f6f60"></div>


<svg class="ic" style="left:440px;top:675px" width="160" height="30" viewBox="440 675 160 30" fill="#fff">
<circle cx="456.2" cy="683.9" r="2.3"/><rect x="456" y="683.2" width="8" height="1.5"/><rect x="462.8" y="681.6" width="19.1" height="4.4"/>
<circle cx="451.8" cy="689.9" r="2.3"/><rect x="456.4" y="687.7" width="10.6" height="4.3" rx="2.1"/><rect x="466" y="689.2" width="4" height="1.5"/><rect x="469.6" y="687.7" width="12.3" height="4.3"/>
<circle cx="454.5" cy="695.9" r="2.1"/><circle cx="461.5" cy="695.9" r="2.1"/><rect x="461" y="695.2" width="6" height="1.5"/><rect x="466.2" y="693.9" width="15.7" height="4"/>
<!-- I -->
<rect x="488" y="684.4" width="3.4" height="11.6"/>
<!-- R -->
<path d="M494.6 684.4h9.4c1.6 0 2.6 1 2.6 2.6v2.2c0 1.4-0.8 2.3-2 2.5l3.2 4.3h-4l-3-4.2h-2.8v4.2h-3.4z M498 687.3v1.9h5.2v-1.9z" fill-rule="evenodd"/>
<!-- A -->
<path d="M508 696l5.6-11.6h3.6l6.9 11.6h-4l-4.7-8.2-3.4 8.2z"/>
<!-- N -->
<path d="M525 696v-11.6h3.4l6.4 6.8v-6.8h3.4v11.6h-3l-6.8-7.2v7.2z"/>
<!-- G -->
<path d="M543 684.4h12v2.9h-8.6v5.8h5.2v-1.2h-2.6v-2.8h6v6.9h-12z"/>
<!-- P -->
<path d="M556.4 684.4h10.4c1.6 0 2.5 1 2.5 2.5v3.1c0 1.5-0.9 2.5-2.5 2.5h-6.9v3.5h-3.5v-6.5h9.5v-2.2h-9.5z"/>
<!-- U -->
<path d="M571.8 684.4h3.4v8.5h6.3v-8.5h3.5v9.1c0 1.5-1 2.5-2.5 2.5h-8.2c-1.5 0-2.5-1-2.5-2.5z"/>
</svg>

<!-- overlays -->
<svg class="ic" style="left:0;top:0" width="1063" height="713" viewBox="0 0 1063 713">
<path d="M0 54L67 164L0 274z" fill="rgba(116,186,154,0.4)"/>
<path d="M917 624.5H1063V668H890z" fill="rgba(116,186,154,0.4)"/>
</svg>

<!-- badge -->
<div class="a" style="left:877px;top:15px;width:50px;height:46px;background:#bfe0d3;border-radius:10px;box-shadow:0 2px 4px rgba(0,0,0,0.18)"></div>
<svg class="ic" style="left:877px;top:15px" width="50" height="46" viewBox="877 15 50 46">
<path d="M885.1 25.3L889.9 23.1C891.6 28.5 893.4 36.5 893.6 48.6H888C888 40.5 887.3 31.5 885.1 25.3Z" fill="#000"/>
<path d="M905.9 23.9C911.2 28.6 918.1 35 918.1 41.5C918.1 46 915 48.8 911.5 48.8C909.7 48.8 908.3 48 907.6 47C906.8 48 905.4 48.8 903.5 48.8C899.5 48.8 897.3 45.5 897.3 41C897.3 36.5 900.2 31.5 903.2 28.3L902.3 27.2Z M907.5 33.2C910.5 36.5 912.8 39.5 912.8 41.5C912.8 42.5 912.3 43 911.5 43C910.2 43 909 40.8 907.5 40.6C906 40.8 904.8 43 903.6 43C902.9 43 902.5 42.5 902.5 41.7C902.5 39.5 904.5 36.5 907.5 33.2Z" fill="#000" fill-rule="evenodd"/>
</svg>
</body></html>
